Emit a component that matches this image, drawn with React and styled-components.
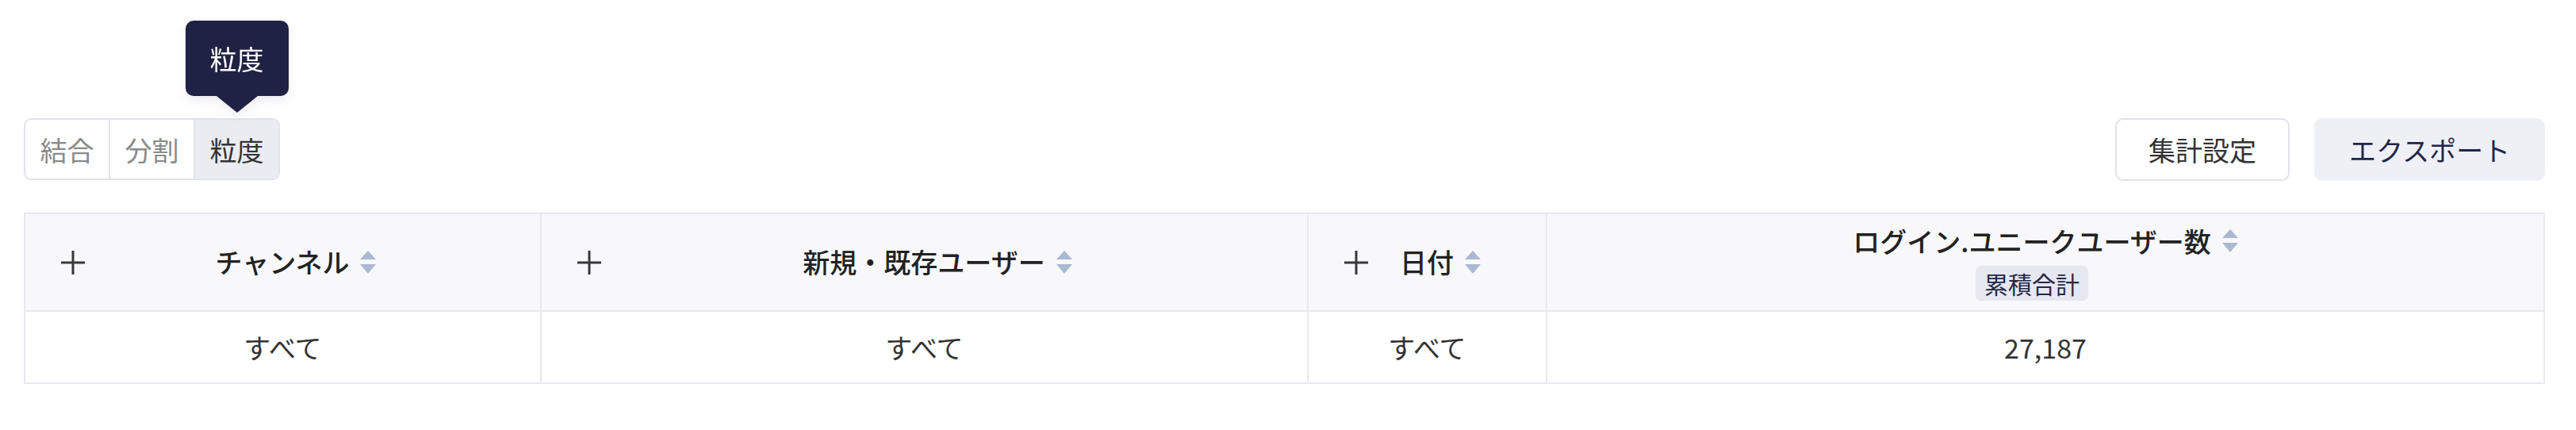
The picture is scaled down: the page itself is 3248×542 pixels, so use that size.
import React from 'react'
import styled, { createGlobalStyle } from 'styled-components'

const GlobalStyle = createGlobalStyle`
  body {
    margin: 0;
    background: #fff;
    font-family: "Noto Sans CJK JP", "Noto Sans", sans-serif;
    color: #333;
  }
`

const Page = styled.div`
  padding: 149px 39px 60px 30px;
`

// toolbar

const Toolbar = styled.div`
  display: flex;
  align-items: center;
  justify-content: space-between;
  height: 78px;
  margin-bottom: 41px;
`

const Segmented = styled.div`
  display: flex;
  height: 78px;
  box-sizing: border-box;
  border: 2px solid #e1e3ea;
  border-radius: 9px;
`

const Segment = styled.div`
  position: relative;
  width: 105px;
  display: flex;
  align-items: center;
  justify-content: center;
  font-size: 34px;
  color: ${p => (p.$active ? '#333' : '#8a8a8a')};
  background: ${p => (p.$active ? '#ebecf2' : '#fff')};
  border-left: ${p => (p.$first ? 'none' : '2px solid #e1e3ea')};
  &:first-child {
    border-radius: 7px 0 0 7px;
  }
  &:last-child {
    border-radius: 0 7px 7px 0;
  }
`

const Tooltip = styled.div`
  position: absolute;
  left: 50%;
  bottom: calc(100% + 30px);
  transform: translateX(-50%);
  width: 130px;
  height: 95px;
  display: flex;
  align-items: center;
  justify-content: center;
  background: #1f2244;
  color: #fff;
  font-size: 34px;
  border-radius: 10px;
  filter: drop-shadow(0 6px 6px rgba(31, 34, 68, 0.08));
  &::after {
    content: '';
    position: absolute;
    top: 100%;
    left: 50%;
    transform: translateX(-50%);
    border-left: 26px solid transparent;
    border-right: 26px solid transparent;
    border-top: 21px solid #1f2244;
  }
`

const Actions = styled.div`
  display: flex;
  gap: 31px;
`

const Button = styled.button`
  height: 79px;
  box-sizing: border-box;
  padding: 0 ${p => (p.$soft ? 42 : 40)}px;
  font-family: inherit;
  font-size: 34px;
  border-radius: 10px;
  cursor: pointer;
  color: ${p => (p.$soft ? '#23264a' : '#333')};
  background: ${p => (p.$soft ? '#eff0f6' : '#fff')};
  border: 2px solid ${p => (p.$soft ? '#eff0f6' : '#e1e3ea')};
`

// table

const Table = styled.div`
  border: 2px solid #e8e9ef;
`

const Row = styled.div`
  display: grid;
  grid-template-columns: 649px 967px 301px 1fr;
  height: ${p => (p.$head ? 121 : 89)}px;
  background: ${p => (p.$head ? '#f8f8fa' : '#fff')};
  border-bottom: ${p => (p.$head ? '2px solid #e8e9ef' : 'none')};
`

const Cell = styled.div`
  display: flex;
  align-items: center;
  justify-content: center;
  border-left: 2px solid #e8e9ef;
  &:first-child {
    border-left: none;
  }
  font-size: 34px;
  color: #333;
`

const HeadCell = styled(Cell)`
  justify-content: flex-start;
  padding: ${p => (p.$plus ? '0 42px 0 45px' : '0 16px')};
  color: #222;
  font-weight: 500;
`

const HeadContent = styled.div`
  flex: 1;
  display: flex;
  align-items: center;
  justify-content: center;
`

const LabelStack = styled.div`
  display: flex;
  flex-direction: column;
  align-items: center;
  gap: 8px;
`

const Label = styled.span`
  line-height: 1.3;
  white-space: nowrap;
`

const Tag = styled.span`
  font-size: 30px;
  font-weight: 400;
  color: #25284a;
  background: #e6e7ef;
  border-radius: 7px;
  padding: 2px 11px;
  line-height: 40px;
`

const SortWrap = styled.span`
  display: inline-flex;
  margin-left: 14px;
  align-self: ${p => (p.$top ? 'flex-start' : 'center')};
  margin-top: ${p => (p.$top ? '7px' : '0')};
`

const PlusWrap = styled.span`
  display: inline-flex;
  width: 30px;
  height: 30px;
  flex-shrink: 0;
  cursor: pointer;
`

const PlusIcon = () => (
  <PlusWrap>
    <svg width="30" height="30" viewBox="0 0 30 30">
      <path d="M15 0v30M0 15h30" stroke="#383838" strokeWidth="3" />
    </svg>
  </PlusWrap>
)

const SortIcon = ({ top }) => (
  <SortWrap $top={top}>
    <svg width="20" height="30" viewBox="0 0 20 30">
      <path d="M10 0L20 11H0z" fill="#a9b9d1" />
      <path d="M10 29L20 17H0z" fill="#a9b9d1" />
    </svg>
  </SortWrap>
)

const dims = ['チャンネル', '新規・既存ユーザー', '日付']

export default function App() {
  return (
    <Page>
      <GlobalStyle />
      <Toolbar>
        <Segmented>
          <Segment $first>結合</Segment>
          <Segment>分割</Segment>
          <Segment $active>
            粒度
            <Tooltip>粒度</Tooltip>
          </Segment>
        </Segmented>
        <Actions>
          <Button>集計設定</Button>
          <Button $soft>エクスポート</Button>
        </Actions>
      </Toolbar>
      <Table>
        <Row $head>
          {dims.map(d => (
            <HeadCell key={d} $plus>
              <PlusIcon />
              <HeadContent>
                <Label>{d}</Label>
                <SortIcon />
              </HeadContent>
            </HeadCell>
          ))}
          <HeadCell>
            <HeadContent>
              <LabelStack>
                <Label>ログイン.ユニークユーザー数</Label>
                <Tag>累積合計</Tag>
              </LabelStack>
              <SortIcon top />
            </HeadContent>
          </HeadCell>
        </Row>
        <Row>
          <Cell>すべて</Cell>
          <Cell>すべて</Cell>
          <Cell>すべて</Cell>
          <Cell>27,187</Cell>
        </Row>
      </Table>
    </Page>
  )
}
